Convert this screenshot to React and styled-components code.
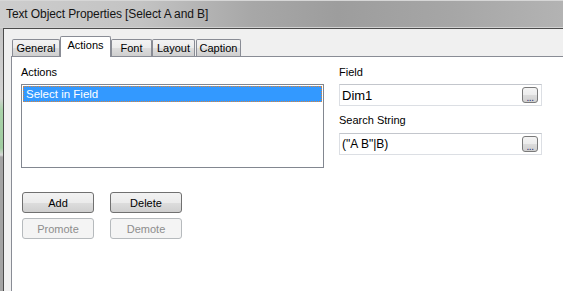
import React from "react";
import styled, { createGlobalStyle, css } from "styled-components";

const GlobalStyle = createGlobalStyle`
  html, body { margin: 0; padding: 0; background: #ffffff; }
  body { font-family: "Liberation Sans", Arial, sans-serif; overflow: hidden; }
  * { box-sizing: border-box; }
`;

const Screen = styled.div`
  width: 563px;
  height: 291px;
  display: flex;
  flex-direction: column;
  overflow: hidden;
`;

const TitleBar = styled.div`
  height: 28px;
  flex: none;
  display: flex;
  align-items: center;
  padding: 0 0 1px 6px;
  background: linear-gradient(
    to right,
    #cdcdcd 0%,
    #c3c3c3 25%,
    #a7a7a7 45%,
    #9d9d9d 60%,
    #a6a6a6 80%,
    #b3b3b3 100%
  );
  border-top: 1px solid #d6d6d6;
  border-bottom: 1px solid #d2d2d2;
`;

const Title = styled.span`
  font-size: 12px;
  color: #141414;
  letter-spacing: -0.1px;
  white-space: nowrap;
`;

const Body = styled.div`
  flex: 1;
  display: flex;
  min-height: 0;
`;

const Backdrop = styled.div`
  width: 3px;
  flex: none;
  background: linear-gradient(
    to bottom,
    #c4c4c4 0px,
    #d4d4d4 70px,
    #a9d3a9 82px,
    #9fcc9f 120px,
    #d8d8d8 127px,
    #a3a3a3 129px,
    #a3a3a3 100%
  );
`;

const Window = styled.div`
  flex: 1;
  display: flex;
  flex-direction: column;
  background: #f0f0f0;
  border-top: 1px solid #4b4b4b;
  border-left: 1px solid #4b4b4b;
  padding: 7px 0 0 7px;
`;

const TabRow = styled.div`
  height: 21px;
  display: flex;
  align-items: flex-end;
  padding-left: 1px;
  margin-bottom: -1px;
  position: relative;
  z-index: 1;
`;

const Tab = styled.div`
  width: ${(p) => p.$w}px;
  margin-left: ${(p) => p.$ml || 0}px;
  display: flex;
  justify-content: center;
  font-size: 11px;
  color: #000;
  border: 1px solid #898c95;
  border-bottom: none;
  ${(p) =>
    p.$active
      ? css`
          height: 21px;
          background: #ffffff;
          padding-top: 2px;
          border-radius: 2px 2px 0 0;
        `
      : css`
          height: 17px;
          margin-bottom: 1px;
          padding-top: 2px;
          background: linear-gradient(to bottom, #f3f3f3 0%, #ebebeb 50%, #dddddd 51%, #cfcfcf 100%);
          border-radius: 2px 2px 0 0;
        `}
`;

const Panel = styled.div`
  flex: 1;
  background: #ffffff;
  border-top: 1px solid #898c95;
  border-left: 1px solid #898c95;
  padding: 8px 0 0 9px;
  display: flex;
  gap: 15px;
  align-items: flex-start;
`;

const Column = styled.div`
  width: ${(p) => p.$w}px;
  display: flex;
  flex-direction: column;
`;

const Label = styled.div`
  height: 14px;
  line-height: 14px;
  font-size: 11px;
  color: #000;
  margin-bottom: ${(p) => p.$mb}px;
  white-space: nowrap;
`;

const ListBox = styled.div`
  height: 84px;
  border: 1px solid #828790;
  padding: 1px;
  background: #fff;
`;

const ListItem = styled.div`
  height: 16px;
  line-height: 14px;
  background: #3399ff;
  color: #fff;
  font-size: 11.5px;
  padding-left: 2px;
  border: 1px dotted #d9843a;
`;

const ButtonGrid = styled.div`
  margin: 24px 0 0 1px;
  display: grid;
  grid-template-columns: 72px 72px;
  grid-auto-rows: 21px;
  column-gap: 16px;
  row-gap: 5px;
`;

const Button = styled.div`
  display: flex;
  align-items: center;
  justify-content: center;
  font-size: 11px;
  border-radius: 3px;
  ${(p) =>
    p.$disabled
      ? css`
          color: #8d8d8d;
          border: 1px solid #b6babd;
          background: #f4f4f4;
        `
      : css`
          color: #000;
          border: 1px solid #707070;
          background: linear-gradient(to bottom, #f2f2f2 0%, #ebebeb 50%, #dddddd 51%, #cfcfcf 100%);
        `}
`;

const Input = styled.div`
  height: 22px;
  display: flex;
  align-items: center;
  justify-content: space-between;
  padding: 0 3px 0 2px;
  border: 1px solid #dcdfe4;
  border-top-color: #c3c6cc;
  background: #fff;
  margin-bottom: ${(p) => p.$mb || 0}px;
`;

const InputText = styled.span`
  font-size: ${(p) => p.$size}px;
  color: #000;
  white-space: nowrap;
`;

const DotsButton = styled.div`
  width: 16px;
  height: 16px;
  border: 1px solid #7a7a7a;
  border-radius: 3px;
  background: linear-gradient(to bottom, #f4f4f4 0%, #ececec 50%, #dcdcdc 51%, #d0d0d0 100%);
  display: flex;
  justify-content: center;
  align-items: flex-end;
  font-size: 10px;
  line-height: 9px;
  color: #1d2a6e;
  letter-spacing: -0.5px;
`;

export default function App() {
  const tabs = [
    { label: "General", w: 48 },
    { label: "Actions", w: 51, active: true },
    { label: "Font", w: 41 },
    { label: "Layout", w: 43 },
    { label: "Caption", w: 45, ml: 1 },
  ];
  return (
    <>
      <GlobalStyle />
      <Screen>
        <TitleBar>
          <Title>Text Object Properties [Select A and B]</Title>
        </TitleBar>
        <Body>
          <Backdrop />
          <Window>
            <TabRow>
              {tabs.map((t) => (
                <Tab key={t.label} $w={t.w} $ml={t.ml} $active={t.active}>
                  {t.label}
                </Tab>
              ))}
            </TabRow>
            <Panel>
              <Column $w={303}>
                <Label $mb={5}>Actions</Label>
                <ListBox>
                  <ListItem>Select in Field</ListItem>
                </ListBox>
                <ButtonGrid>
                  <Button>Add</Button>
                  <Button>Delete</Button>
                  <Button $disabled>Promote</Button>
                  <Button $disabled>Demote</Button>
                </ButtonGrid>
              </Column>
              <Column $w={203}>
                <Label $mb={5}>Field</Label>
                <Input $mb={7}>
                  <InputText $size={13}>Dim1</InputText>
                  <DotsButton>...</DotsButton>
                </Input>
                <Label $mb={6}>Search String</Label>
                <Input>
                  <InputText $size={12}>("A B"|B)</InputText>
                  <DotsButton>...</DotsButton>
                </Input>
              </Column>
            </Panel>
          </Window>
        </Body>
      </Screen>
    </>
  );
}
